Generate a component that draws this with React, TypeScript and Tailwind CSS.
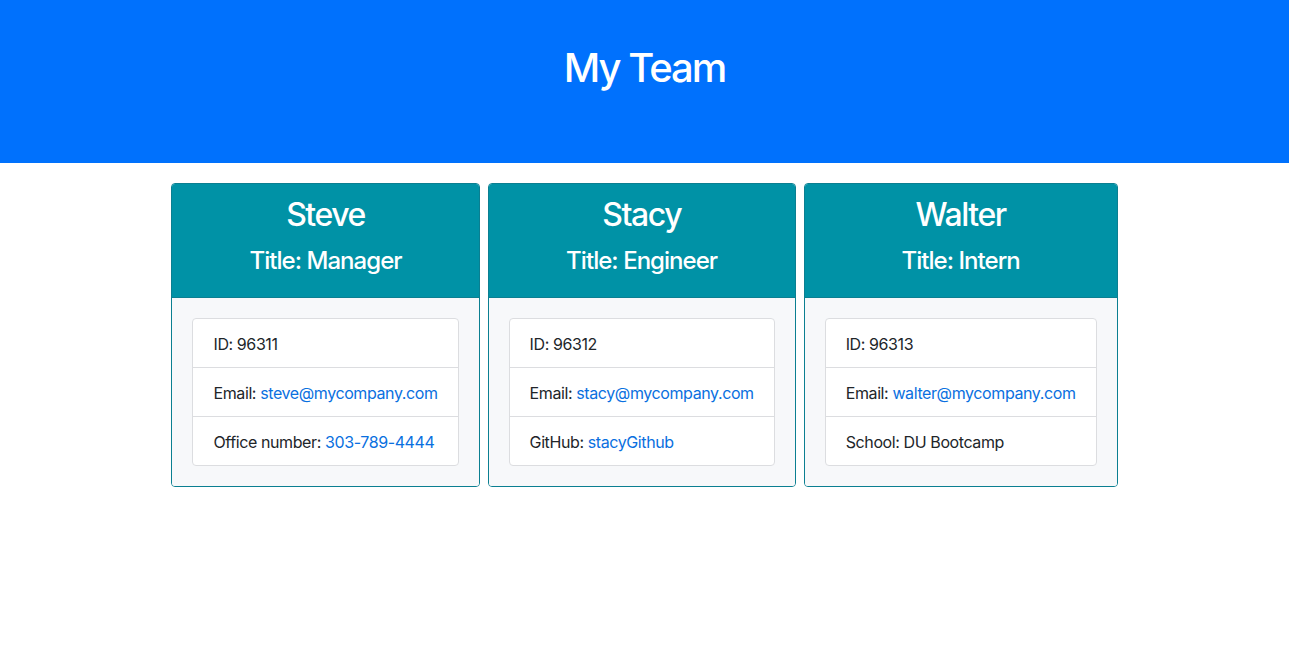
import React from "react";

type Member = {
  name: string;
  title: string;
  id: string;
  email: string;
  extraLabel: string;
  extraValue: string;
  extraLink: boolean;
};

const team: Member[] = [
  { name: "Steve", title: "Manager", id: "96311", email: "steve@mycompany.com", extraLabel: "Office number", extraValue: "303-789-4444", extraLink: true },
  { name: "Stacy", title: "Engineer", id: "96312", email: "stacy@mycompany.com", extraLabel: "GitHub", extraValue: "stacyGithub", extraLink: true },
  { name: "Walter", title: "Intern", id: "96313", email: "walter@mycompany.com", extraLabel: "School", extraValue: "DU Bootcamp", extraLink: false },
];

function Card({ m }: { m: Member }) {
  return (
    <div className="flex flex-col rounded-[4px] border border-[#0b7f91] overflow-hidden">
      <div className="bg-[#0092a6] text-white text-center px-5 pt-3 pb-[22px] border-b border-[#0b7f91]">
        <h2 className="text-[32px] leading-[38px] font-medium tracking-[-0.045em]">{m.name}</h2>
        <h4 className="text-[24px] leading-[29px] font-medium tracking-[-0.04em] mt-3">Title: {m.title}</h4>
      </div>
      <div className="bg-[#f7f8fa] p-5">
        <ul className="bg-white border border-[#dcdde0] rounded-[4px] text-[16px] tracking-[-0.4px] text-[#212529]">
          <li className="px-5 pt-[13px] pb-[11px] leading-6">ID: {m.id}</li>
          <li className="px-5 pt-[13px] pb-[11px] leading-6 border-t border-[#dcdde0]">
            Email: <a className="text-[#0a70e0]">{m.email}</a>
          </li>
          <li className="px-5 pt-[13px] pb-[11px] leading-6 border-t border-[#dcdde0]">
            {m.extraLabel}:{" "}
            {m.extraLink ? <a className="text-[#0a70e0]">{m.extraValue}</a> : m.extraValue}
          </li>
        </ul>
      </div>
    </div>
  );
}

export default function App() {
  return (
    <div className="min-h-screen bg-white font-['Inter','Liberation_Sans',Arial,sans-serif]">
      <header className="h-[163px] bg-[#0071fd] text-white text-center pt-[44px]">
        <h1 className="text-[40px] leading-[48px] font-medium tracking-[-0.05em]">My Team</h1>
      </header>
      <main className="flex justify-center gap-2 pt-5">
        {team.map((m) => (
          <Card key={m.name} m={m} />
        ))}
      </main>
    </div>
  );
}
